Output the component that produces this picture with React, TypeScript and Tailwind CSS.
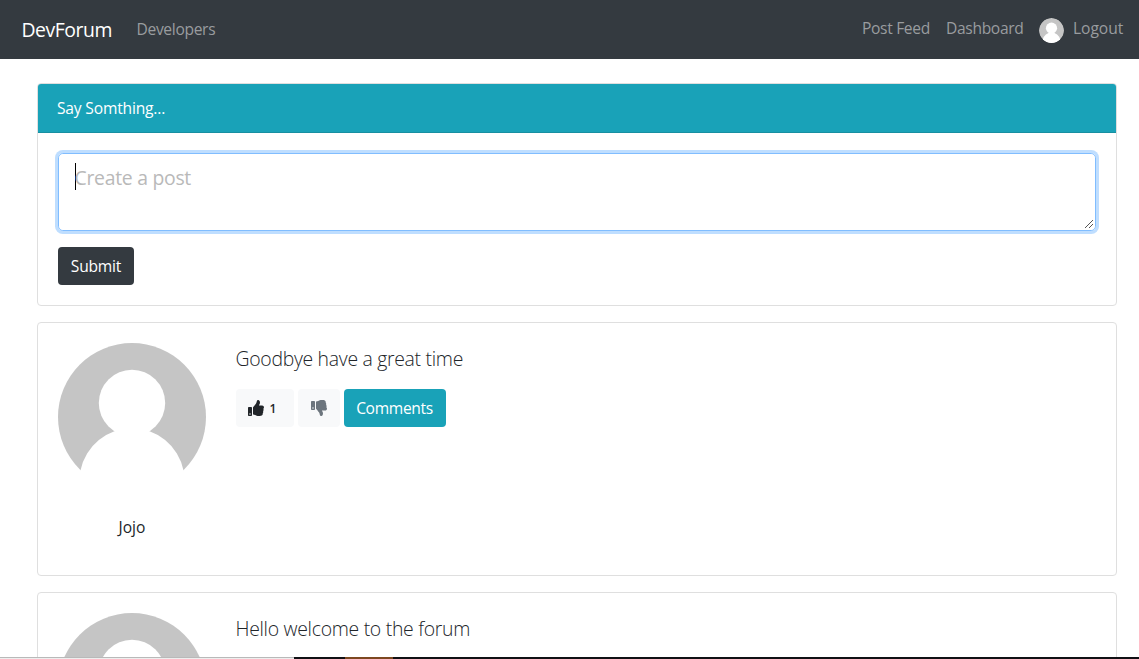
import React from "react";
import { FaThumbsDown, FaThumbsUp } from "react-icons/fa";

function Avatar({ className }: { className: string }) {
  return (
    <svg viewBox="0 0 148 148" className={className} aria-hidden="true">
      <circle cx="74" cy="74" r="74" fill="#c5c5c5" />
      <circle cx="74" cy="60" r="33.2" fill="#fff" />
      <rect x="58" y="80" width="32" height="20" fill="#fff" />
      <path d="M20 148C20 144 21.5 138 22.6 127A52.5 52.5 0 0 1 125.4 127C126.5 138 128 144 128 148Z" fill="#fff" />
    </svg>
  );
}

function Navbar() {
  return (
    <nav className="flex h-[59px] shrink-0 items-start bg-[#343a40] pr-[15px] pl-[21.5px] leading-6 text-[#999c9f]">
      <a className="mt-[15px] w-[115px] text-[19.4px] leading-[30px] tracking-[-0.45px] text-white">DevForum</a>
      <a className="mt-[17px]">Developers</a>
      <div className="mt-4 ml-auto flex">
        <a className="w-[84px] whitespace-nowrap">Post Feed</a>
        <a className="w-[93px]">Dashboard</a>
        <a className="flex">
          <Avatar className="mt-[2px] mr-[9px] size-[25px] overflow-hidden rounded-full" />
          <span className="w-[51px] tracking-[-0.05px]">Logout</span>
        </a>
      </div>
    </nav>
  );
}

function PostForm() {
  return (
    <section className="h-[223px] shrink-0 overflow-hidden rounded border border-[#dfdfdf]">
      <header className="h-[49px] border-b border-[#178fa1] bg-[#19a2b8] pt-3 pl-[19px] leading-6 tracking-[-0.18px] text-white">
        Say Somthing...
      </header>
      <div className="px-5 pt-5">
        <div className="flex h-[78px] w-[1038px] rounded-[4.8px] border border-[#80bdff] pt-[9px] pl-4 shadow-[0_0_0_3px_#bfdeff]">
          <span className="h-[27px] w-px bg-black" />
          <span className="-ml-[1.5px] h-[30px] text-[19.4px] leading-[30px] tracking-[-0.28px] text-[#b9b9b9]">
            Create a post
          </span>
          <svg viewBox="0 0 10 10" className="mt-auto mr-px mb-px ml-auto size-[10px]" stroke="#555" fill="none">
            <path d="M1 9 9 1M5 9l4-4" />
          </svg>
        </div>
        <button className="mt-4 h-[38px] w-[76px] rounded bg-[#343a40] pt-px tracking-[-0.2px] text-white">
          Submit
        </button>
      </div>
    </section>
  );
}

function Reactions({ likes }: { likes: number }) {
  return (
    <div className="mt-[15px] flex gap-1">
      <button className="flex h-[38px] w-[58px] items-center rounded bg-[#f8f9fa] pl-[12.5px]">
        <FaThumbsUp className="size-4 text-[#212529]" />
        <span className="mt-px ml-[5.5px] text-[12px] font-semibold text-[#212529]">{likes}</span>
      </button>
      <button className="flex h-[38px] w-[42px] items-center justify-center rounded bg-[#f8f9fa]">
        <FaThumbsDown className="size-4 text-[#6c757d]" />
      </button>
      <button className="h-[38px] w-[102px] rounded bg-[#19a2b8] pt-px text-white">Comments</button>
    </div>
  );
}

function Post({ author, text, likes }: { author?: string; text: string; likes?: number }) {
  return (
    <article className="flex h-[254px] shrink-0 rounded border border-[#dfdfdf] pt-5 pl-5">
      <div className="mr-[29.5px] flex w-[148px] flex-col items-center">
        <Avatar className="size-[148px]" />
        {author && <p className="mt-6 leading-6 tracking-normal">{author}</p>}
      </div>
      <div>
        <p className="pt-px text-[19.4px] leading-[30px] font-light tracking-[-0.29px]">{text}</p>
        {likes !== undefined && <Reactions likes={likes} />}
      </div>
    </article>
  );
}

export default function App() {
  return (
    <div className="flex h-[659px] w-[1139px] flex-col overflow-hidden bg-white font-['Open_Sans',sans-serif] text-[15.6px] tracking-[-0.33px] text-[#212529]">
      <Navbar />
      <main className="flex h-[598px] flex-col gap-4 overflow-hidden pt-6 pr-[22px] pl-[37px]">
        <PostForm />
        <Post author="Jojo" text="Goodbye have a great time" likes={1} />
        <Post text="Hello welcome to the forum" />
      </main>
      <div className="flex h-[2px] shrink-0">
        <span className="w-[294px] border-t border-[#b9b9b9] bg-[#eeeeee]" />
        <span className="w-[51px] bg-[#101014]" />
        <span className="w-12 bg-[#7d4820]" />
        <span className="grow bg-[#101014]" />
      </div>
    </div>
  );
}
